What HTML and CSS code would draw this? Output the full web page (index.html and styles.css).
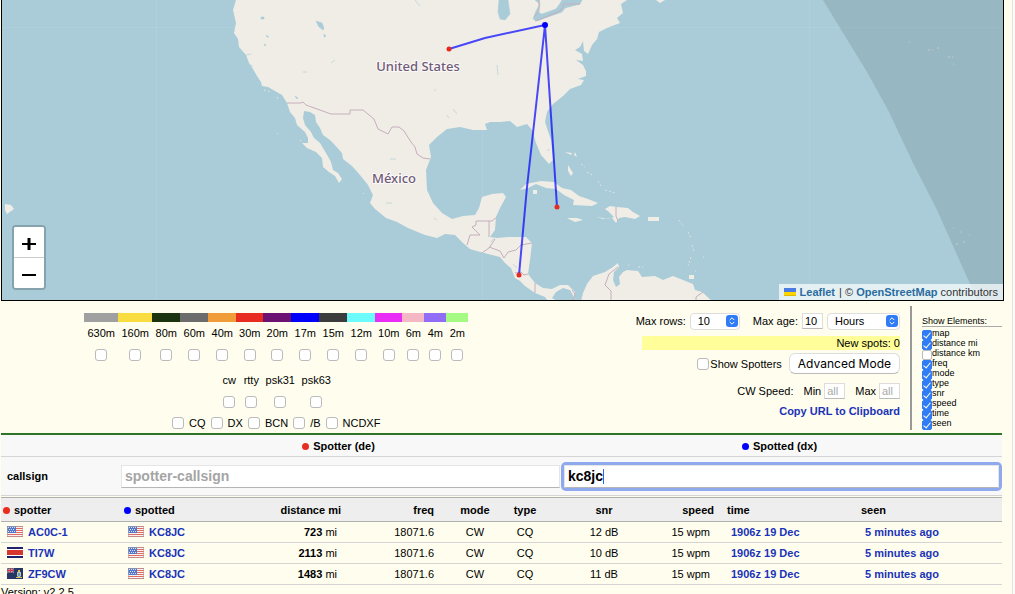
FILE: index.html
```html
<!DOCTYPE html>
<html lang="en">
<head>
<meta charset="utf-8">
<title>Spots map</title>
<link rel="stylesheet" href="styles.css">
</head>
<body>
<svg class="defs" width="0" height="0" aria-hidden="true">
  <symbol id="us" viewBox="0 0 16 11">
    <path fill="#f7f3f3" d="M0 0h16v11H0z"/>
    <path stroke="#e4695f" d="M0 .5h16M0 2.500h16M0 4.500h16M0 6.500h16M0 8.500h16M0 10.500h16"/>
    <path fill="#5478c9" d="M0 0h9v7H0z"/>
    <path stroke="#d5e0fa" stroke-dasharray="1 1" d="M1 1.500h7M2 3.500h6M1 5.500h7"/>
    <path fill="none" stroke="#a9a2a6" stroke-opacity=".6" d="M.5.5h15v10H.5z"/>
  </symbol>
  <symbol id="cr" viewBox="0 0 16 11">
    <path fill="#fff" d="M0 0h16v11H0z"/>
    <path fill="#20236b" d="M0 0h16v2H0zM0 9h16v2H0z"/>
    <path fill="#d5372e" d="M0 3h16v5H0z"/>
  </symbol>
  <symbol id="ky" viewBox="0 0 16 11">
    <path fill="#263766" d="M0 0h16v11H0z"/>
    <path stroke="#a58ba8" d="M0 0l7 5M7 0L0 5"/>
    <path stroke="#d8a9b4" stroke-width="2" d="M0 2.500h7M3.500 0v5"/>
    <path stroke="#cf3548" d="M0 2.500h7M3.500 0v5"/>
    <path fill="#b9c4c4" d="M10 4h4v4l-2 2-2-2z"/>
    <path fill="#6d9a9a" d="M11 5h2v3h-2z"/>
    <path fill="#d9c15b" d="M11 2h2v2h-2zM9 9h6v1H9z"/>
  </symbol>
  <symbol id="updown" viewBox="0 0 12 12">
    <rect width="12" height="12" rx="3" fill="#2f7cf6"/>
    <path d="M4 4.800L6 2.800l2 2M4 7.200l2 2 2-2" fill="none" stroke="#fff" stroke-linecap="round" stroke-linejoin="round"/>
  </symbol>
</svg>

<div class="page">
  <section class="map" aria-label="Map">
    <svg class="tiles" viewBox="2 0 1001 300" preserveAspectRatio="xMinYMin slice">
      <path fill="#a9ccd8" d="M2 0h1001v300H2z"/>
      <path class="land" d="M236 0L233 10L236 23L234 33L238 39L239 47L246 55L249 63L253 69L257 76L261 82L262 86L268 87L275 91L282 95L287 103L290 112L295 118L297 125L305 132L308 138L308 143L302 143L307 148L316 152L322 158L323 167L329 172L335 176L339 183L342 179L338 173L333 170L331 162L326 153L320 143L314 138L311 132L305 125L303 118L304 111L310 112L315 115L316 122L320 128L323 135L330 140L333 143L342 153L343 159L352 166L360 175L368 185L373 195L370 203L375 209L386 218L397 222L408 228L425 235L437 238L445 234L455 235L463 243L470 249L480 252L492 255L500 257L505 263L511 268L513 273L515 278L520 281L525 286L535 293L545 297L548 301H557L552 298L556 292L563 288L570 290L574 297V301H581L583 293L587 284L593 276L605 272L613 267L618 263L619 267L614 272L613 280L616 287L620 284L619 277L623 272L627 270L638 271L642 277L655 276L663 280L673 276L683 280L693 284L695 290L702 292L712 301H574L575 292L568 285L560 285L552 289L543 288L535 283L528 274L530 260L532 243L526 237L508 237L497 238L490 237L495 230L496 217L500 208L506 197L503 193L492 194L482 197L479 208L475 215L463 216L452 219L442 213L433 203L427 190L426 170L431 157L429 145L437 137L447 129L460 127L473 130L487 130L485 124L490 122L500 122L510 121L517 127L527 124L532 130L536 143L541 155L549 164L553 160L551 140L545 122L547 112L553 104L563 96L570 89L581 85L584 80L578 79L586 76L586 71L583 65L576 60L583 61L582 54L575 50L580 47L583 41L584 51L588 54L592 45L597 39L599 32L607 28L612 26L620 23L617 18L623 13L621 4L627 0Z"/>
      <path class="land" d="M520 190L526 184L541 181L554 182L562 188L571 190L579 196L588 199L598 203L592 206L573 205L574 200L564 195L556 189L546 188L536 184L528 188ZM567 218L577 218L583 220L575 222ZM596 217L608 219L614 217L609 212L605 209L610 206L617 207L628 208L633 212L640 216L635 219L625 217L619 218L616 223L612 218L603 219ZM648 217h11v4h-11zM533 190h4v4h-4zM565 152l7 1-1 2zM575 152l2 5-3-2zM568 165l5 8-2 3-3-5zM656 0h9l-5 3zM5 204l6 1 3 4-7 5-2-4zM689 275h5v4h-5z"/>
      <path class="islets" d="M581 164l4 3M587 172l7 4M598 181l3 5M605 190l10 3M628 265h1M638 267h5M679 220l5 7M688 232l3 6M692 245l2 6M691 257l-3 9M703 257h1M695 271h1M264 90l7 2M277 97l1 3M277 133l1 1M300 140l2 2M363 193l1 1M909 42h1M928 50h5M937 48h2M948 57h5M953 64h1M953 228h1M960 232h1M969 235h1M956 244h3M963 242h2"/>
      <path class="water" d="M499 0l-1 12 2 7 5 1 5-6-2-14zM535 0L540 4L536 11L533 19L537 21L545 18L562 12L565 8L580 4L582 0H562L559 5L556 9L542 14L538 12L540 4L539 0zM316 21l6 2 2 5-1 2-4-3zM324 34l2 2-2 1zM261 17h3v2h-3zM266 35l3 2-2 0zM264 44l2 1-1 1zM295 96l3 2-1 1z"/>
      <path class="ponds" d="M390 159h6M386 203h6M547 150h3M513 264l4 4M434 218l3 2M497 65l1 10M447 115l2 3M453 109l4 5M303 72h4M331 63l4-3M434 91l2-2M246 55l5-1M250 65l3 1M491 242l3-4M415 0l5 6"/>
      <path class="border" d="M287 103L301 103L303 102L306 105L331 114H350V110H363L374 119L378 129L388 134L392 127L399 127L404 131L411 142L415 147L417 154L423 158L430 159M497 217L492 221H476V225L472 227L480 235H470L467 245M489 221V237M495 239L489 248L482 253M489 247L500 251L504 258L508 252L516 250L521 245L532 243M515 273L521 272L524 275L528 274M535 283V293M572 290L575 294L573 301M618 267L609 274L605 285L611 291L611 300M703 292L696 297V301M534 17L539 11V0M535 21L543 18L558 12L563 8V4H580M616 207V216L618 221"/>
      <path class="seam" d="M2 27.500h1001M156.500 0v300M482.500 0v300M809.500 0v300"/>
      <path fill="#000" fill-opacity=".1" d="M823 0L840 28L867 72L888 110L913 163L937 210L970 284L977 300H1003V0Z"/>
      <g class="label">
        <text x="418" y="71">United States</text>
        <text x="394" y="183">México</text>
      </g>
      <path class="route" d="M449 49L485 38L545 25L557 207M545 25L527 187L519 275"/>
      <g fill="#e8291f"><circle cx="449" cy="49" r="2.500"/><circle cx="557" cy="207" r="2.500"/><circle cx="519" cy="275" r="2.500"/></g>
      <circle cx="545" cy="25" r="3" fill="#00f"/>
    </svg>
    <div class="zoom">
      <button type="button" aria-label="Zoom in"><svg viewBox="0 0 30 30"><path d="M8 17h14" stroke="#000" stroke-width="2"/><path d="M15 11v12" stroke="#000" stroke-width="3"/></svg></button>
      <button type="button" aria-label="Zoom out"><svg viewBox="0 0 30 30"><path d="M8 17h14" stroke="#000" stroke-width="2"/></svg></button>
    </div>
    <div class="attribution">
      <svg viewBox="0 0 12 8"><path fill="#4c7be1" d="M0 0h12v4H0z"/><path fill="#ffd500" d="M0 4h12v3H0z"/><path fill="#e0bc00" d="M0 7h12v1H0z"/></svg>
      <a href="#">Leaflet</a> | © <a href="#">OpenStreetMap</a> contributors
    </div>
  </section>

  <section class="controls">
    <div class="filters">
      <div class="bands">
        <label class="c630">630m<input type="checkbox"></label>
        <label class="c160">160m<input type="checkbox"></label>
        <label class="c80">80m<input type="checkbox"></label>
        <label class="c60">60m<input type="checkbox"></label>
        <label class="c40">40m<input type="checkbox"></label>
        <label class="c30">30m<input type="checkbox"></label>
        <label class="c20">20m<input type="checkbox"></label>
        <label class="c17">17m<input type="checkbox"></label>
        <label class="c15">15m<input type="checkbox"></label>
        <label class="c12">12m<input type="checkbox"></label>
        <label class="c10">10m<input type="checkbox"></label>
        <label class="c6">6m<input type="checkbox"></label>
        <label class="c4">4m<input type="checkbox"></label>
        <label class="c2">2m<input type="checkbox"></label>
      </div>
      <div class="modes">
        <label>cw<input type="checkbox"></label>
        <label>rtty<input type="checkbox"></label>
        <label>psk31<input type="checkbox"></label>
        <label>psk63<input type="checkbox"></label>
      </div>
      <div class="types">
        <label><input type="checkbox">CQ</label>
        <label><input type="checkbox">DX</label>
        <label><input type="checkbox">BCN</label>
        <label><input type="checkbox">/B</label>
        <label><input type="checkbox">NCDXF</label>
      </div>
    </div>

    <div class="settings">
      <div class="line limits">
        <label for="rows">Max rows:</label>
        <span class="select rows"><select id="rows"><option>10</option></select><svg><use href="#updown"/></svg></span>
        <label for="age">Max age:</label>
        <input class="small" id="age" value="10">
        <span class="select unit"><select aria-label="Age unit"><option>Hours</option></select><svg><use href="#updown"/></svg></span>
      </div>
      <div class="new-spots">New spots: 0</div>
      <div class="line advanced">
        <label><input type="checkbox">Show Spotters</label>
        <button type="button">Advanced Mode</button>
      </div>
      <div class="line speed">
        <span>CW Speed:</span>
        <label for="min">Min</label><input class="small" id="min" placeholder="all">
        <label for="max">Max</label><input class="small" id="max" placeholder="all">
      </div>
      <a class="copy" href="#">Copy URL to Clipboard</a>
    </div>

    <div class="elements">
      <div class="title">Show Elements:</div>
      <label><input type="checkbox" checked>map</label>
      <label><input type="checkbox" checked>distance mi</label>
      <label><input type="checkbox">distance km</label>
      <label><input type="checkbox" checked>freq</label>
      <label><input type="checkbox" checked>mode</label>
      <label><input type="checkbox" checked>type</label>
      <label><input type="checkbox" checked>snr</label>
      <label><input type="checkbox" checked>speed</label>
      <label><input type="checkbox" checked>time</label>
      <label><input type="checkbox" checked>seen</label>
    </div>
  </section>

  <table class="search">
    <colgroup><col class="name"><col><col></colgroup>
    <tr><th></th><th><i class="dot de"></i>Spotter (de)</th><th><i class="dot dx"></i>Spotted (dx)</th></tr>
    <tr>
      <th class="name" scope="row">callsign</th>
      <td><input aria-label="Spotter callsign" placeholder="spotter-callsign"></td>
      <td><div class="focused"><input aria-label="Spotted callsign" value="kc8jc"><span class="caret"></span></div></td>
    </tr>
  </table>

  <table class="spots">
    <colgroup><col class="w-spotter"><col class="w-spotted"><col class="w-dist"><col class="w-freq"><col class="w-mode"><col class="w-type"><col class="w-snr"><col class="w-speed"><col class="w-time"><col></colgroup>
    <thead>
      <tr><th><i class="dot de"></i>spotter</th><th><i class="dot dx"></i>spotted</th><th class="right">distance mi</th><th class="freq">freq</th><th class="center">mode</th><th class="center">type</th><th class="center">snr</th><th class="right">speed</th><th class="when">time</th><th class="when">seen</th></tr>
    </thead>
    <tbody>
      <tr><td><svg class="flag"><use href="#us"/></svg><a href="#">AC0C-1</a></td><td><svg class="flag"><use href="#us"/></svg><a href="#">KC8JC</a></td><td class="right"><b>723</b> mi</td><td class="freq">18071.6</td><td class="center">CW</td><td class="center">CQ</td><td class="center">12 dB</td><td class="right">15 wpm</td><td class="when"><a href="#">1906z 19 Dec</a></td><td class="when"><a href="#">5 minutes ago</a></td></tr>
      <tr><td><svg class="flag"><use href="#cr"/></svg><a href="#">TI7W</a></td><td><svg class="flag"><use href="#us"/></svg><a href="#">KC8JC</a></td><td class="right"><b>2113</b> mi</td><td class="freq">18071.6</td><td class="center">CW</td><td class="center">CQ</td><td class="center">10 dB</td><td class="right">15 wpm</td><td class="when"><a href="#">1906z 19 Dec</a></td><td class="when"><a href="#">5 minutes ago</a></td></tr>
      <tr><td><svg class="flag"><use href="#ky"/></svg><a href="#">ZF9CW</a></td><td><svg class="flag"><use href="#us"/></svg><a href="#">KC8JC</a></td><td class="right"><b>1483</b> mi</td><td class="freq">18071.6</td><td class="center">CW</td><td class="center">CQ</td><td class="center">11 dB</td><td class="right">15 wpm</td><td class="when"><a href="#">1906z 19 Dec</a></td><td class="when"><a href="#">5 minutes ago</a></td></tr>
    </tbody>
  </table>
  <footer>Version: v2.2.5</footer>
</div>
</body>
</html>
```
FILE: styles.css
```css
* { box-sizing: border-box; }
html { height: 100%; overflow: hidden; background: #fafafa; }
body {
  margin: 0 2px 0 0;
  min-height: 100%;
  background: #fffeee;
  border-right: 1px solid #e2e2e2;
  color: #000;
  font: 11px/14px "Liberation Sans", Arial, sans-serif;
}
.defs { position: absolute; }
.page { padding: 0 10px 0 1px; }
a { color: #1a33b8; font-weight: bold; text-decoration: none; }
input, select, button { font: inherit; color: #000; margin: 0; }

.map {
  position: relative;
  height: 301px;
  margin-right: -2px;
  overflow: hidden;
  border: 1px solid #000;
  border-top: 0;
}
.tiles { display: block; width: 100%; height: 100%; }
.land { fill: #f0ede6; }
.islets { fill: none; stroke: #dfe3df; stroke-width: 1; stroke-dasharray: 2 2; }
.water { fill: #a9ccd8; stroke: #a9ccd8; stroke-opacity: .5; }
.ponds { fill: none; stroke: #a9ccd8; stroke-opacity: .6; }
.border { fill: none; stroke: #c4afbd; }
.seam { fill: none; stroke: #fff; stroke-opacity: .08; }
.route { fill: none; stroke: #00f; stroke-opacity: .7; stroke-width: 2; }
.label text {
  font: 500 13px "Noto Sans", sans-serif;
  fill: #705a78;
  stroke: #fff;
  stroke-opacity: .7;
  stroke-width: 2;
  paint-order: stroke;
  text-anchor: middle;
}
.zoom {
  position: absolute;
  left: 10px;
  bottom: 10px;
  width: 34px;
  border: 2px solid #86a3ad;
  border-radius: 4px;
  background: #fff;
  overflow: hidden;
}
.zoom button { display: block; width: 30px; height: 30px; padding: 0; border: 0; background: #fff; }
.zoom button + button { height: 31px; border-top: 1px solid #ccc; }
.zoom svg { display: block; width: 30px; height: 30px; }
.attribution {
  position: absolute;
  right: 0;
  bottom: 0;
  padding: 1px 5px;
  background: rgba(255, 255, 255, .7);
  color: #333;
}
.attribution svg { width: 12px; height: 8px; }
.attribution a { color: #2a6ca0; }
.attribution a:first-of-type { margin: 0 1px; }

input[type="checkbox"] {
  appearance: none;
  flex: none;
  width: 12px;
  height: 12px;
  border: 1px solid #bbb;
  border-radius: 3px;
  background: #fff;
}
.controls { display: flex; height: 132px; }
.filters { flex: 0 0 55%; display: flex; flex-direction: column; align-items: center; padding-top: 12px; }
.bands { display: grid; grid-template-columns: 34px 34px repeat(3, 28px) 27px repeat(4, 28px) 27px repeat(3, 22px); }
.bands label, .modes label { display: flex; flex-direction: column; align-items: center; gap: 9px; }
.bands label { border-top: 9px solid; padding-top: 4px; }
.bands .c630 { border-color: #a0a0a0; }
.bands .c160 { border-color: #f9dc40; }
.bands .c80 { border-color: #1b330e; }
.bands .c60 { border-color: #6c6c6c; }
.bands .c40 { border-color: #f09c38; }
.bands .c30 { border-color: #e92c20; }
.bands .c20 { border-color: #6b1272; }
.bands .c17 { border-color: #00f; }
.bands .c15 { border-color: #3c3c3c; }
.bands .c12 { border-color: #6cfbfd; }
.bands .c10 { border-color: #e92cf6; }
.bands .c6 { border-color: #f3b8c3; }
.bands .c4 { border-color: #916cf6; }
.bands .c2 { border-color: #a4fb83; }
.modes { display: grid; grid-template-columns: 22px 22px 36px 36px; margin-top: 12px; }
.types { display: flex; gap: 5px; margin-top: 8px; }
.types label { display: flex; align-items: center; gap: 5px; }

.settings { flex: 1; display: flex; flex-direction: column; align-items: flex-end; padding: 12px 10px 0 0; }
.line { display: flex; align-items: center; }
.limits { height: 16px; gap: 4px; }
.select { position: relative; }
.select select {
  appearance: none;
  display: block;
  width: 100%;
  height: 17px;
  padding: 0 0 0 7px;
  border: 1px solid #ddd;
  border-radius: 4px;
  background: #fff;
}
.select svg { position: absolute; right: 2px; top: 2px; width: 12px; height: 12px; pointer-events: none; }
.rows { width: 50px; margin-right: 9px; }
.unit { width: 73px; }
.small { width: 21px; height: 16px; padding: 0 2px; border: 1px solid #ddd; border-bottom-color: #bbb; background: #fff; }
.small::placeholder { color: #aaa; }
.new-spots { width: 258px; margin-top: 7px; background: #fffe98; text-align: right; }
.advanced { margin-top: 3px; gap: 7px; }
.advanced label { display: flex; align-items: center; gap: 1px; }
.advanced button {
  height: 21px;
  padding: 0 8px;
  border: 1px solid #ddd;
  border-bottom-color: #bbb;
  border-radius: 6px;
  background: #fff;
  font: 12px Inter, sans-serif;
  white-space: nowrap;
}
.speed { margin-top: 9px; gap: 3px; }
.speed label { margin-left: 7px; }
.copy { margin-top: 5px; }

.elements {
  flex: 0 0 92px;
  align-self: flex-start;
  margin-top: 5px;
  padding: 10px 0 2px 10px;
  border-left: 2px solid #999;
  font-size: 9px;
  line-height: 10px;
}
.elements .title { margin-bottom: 1px; border-bottom: 1px solid #aaa; }
.elements label { display: flex; align-items: flex-end; height: 10px; }
.elements label input { position: relative; top: 2px; width: 10px; height: 10px; border-radius: 2px; }
.elements input:checked { border-color: #2f7cf6; background: #2f7cf6; }
.elements input:checked::after {
  content: "";
  position: absolute;
  left: 2px;
  top: 0;
  width: 3px;
  height: 6px;
  border: solid #fff;
  border-width: 0 1px 1px 0;
  transform: rotate(40deg);
}

table { width: 100%; table-layout: fixed; border-collapse: separate; border-spacing: 0; }
.dot { display: inline-block; width: 7px; height: 7px; margin-right: 4px; border-radius: 50%; }
.de { background: #e92c20; }
.dx { background: #00f; }
.search { border-top: 2px solid #2f7527; background: #f8f8f8; }
.search th, .search td { padding: 0 1px; border-bottom: 1px solid #d5d5d5; }
.search tr:first-child th { height: 22px; padding-right: 5px; }
.search tr + tr > * { height: 39px; }
.search .name { width: 119px; padding-left: 6px; text-align: left; }
.search input {
  display: block;
  width: 100%;
  height: 23px;
  padding: 0 3px;
  border: 1px solid #e5e5e5;
  border-bottom-color: #b5b5b5;
  background: #fff;
  font: bold 14px "Liberation Sans", Arial, sans-serif;
}
.search input::placeholder { color: #a5a5a5; }
.focused { position: relative; margin: 0 2px; border-radius: 2px; box-shadow: 0 0 0 3px #8fa9ee; }
.caret { position: absolute; left: 39px; top: 4px; width: 1px; height: 15px; background: #2767e8; }

.spots { margin-top: 1px; }
.spots th { height: 25px; padding: 0 2px; border-top: 1px solid #b0b0b0; border-bottom: 1px solid #b0b0b0; background: #eee; text-align: left; }
.spots td { height: 21px; padding: 0 6px; border-bottom: 1px solid #d5d5d5; white-space: nowrap; }
.flag { width: 16px; height: 11px; margin-right: 5px; vertical-align: -1px; }
.w-spotter { width: 121px; }
.w-spotted { width: 122px; }
.w-dist { width: 99px; }
.w-freq { width: 99px; }
.w-mode { width: 66px; }
.w-type { width: 34px; }
.w-snr { width: 124px; }
.w-speed { width: 50px; }
.w-time { width: 134px; }
.spots .center { padding: 0; text-align: center; }
.spots .right { text-align: right; padding-left: 0; }
.spots .freq { padding-right: 8px; text-align: right; }
.spots th.when { padding-left: 11px; }
.spots td.when { padding-left: 15px; }
```
